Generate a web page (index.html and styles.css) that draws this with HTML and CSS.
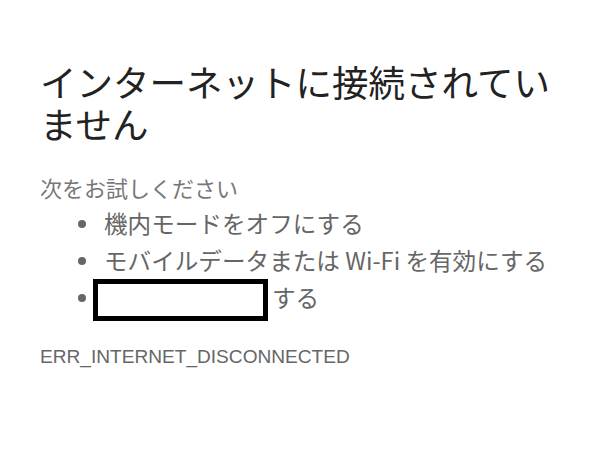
FILE: index.html
```html
<!DOCTYPE html>
<html lang="ja">
<head>
<meta charset="utf-8">
<link rel="stylesheet" href="styles.css">
</head>
<body>
<main class="page">
  <h1 class="title">インターネットに接続されていません</h1>
  <p class="try">次をお試しください</p>
  <ul class="tips">
    <li>機内モードをオフにする</li>
    <li>モバイルデータまたは Wi-Fi を有効にする</li>
    <li><span class="redact"></span>する</li>
  </ul>
  <div class="code">ERR_INTERNET_DISCONNECTED</div>
</main>
</body>
</html>
```
FILE: styles.css
```css
html, body {
  margin: 0;
  padding: 0;
  background: #ffffff;
}
.page {
  padding: 61px 40px 0 40px;
  font-family: "Noto Sans CJK JP", "Noto Sans", sans-serif;
}
.title {
  margin: 0;
  font-size: 36.5px;
  line-height: 42px;
  font-weight: 400;
  color: #222222;
  width: 530px;
}
.try {
  margin: 27px 0 0 0;
  font-size: 22px;
  line-height: 30px;
  color: #777777;
}
.tips {
  list-style: none;
  margin: 3px 0 0 0;
  padding: 0 0 0 64px;
}
.tips li {
  position: relative;
  font-size: 23.6px;
  line-height: 37px;
  color: #666666;
  white-space: nowrap;
}
.tips li::before {
  content: "";
  position: absolute;
  left: -26px;
  top: 15px;
  width: 8px;
  height: 8px;
  border-radius: 50%;
  background: #666666;
}
.redact {
  display: inline-block;
  box-sizing: border-box;
  width: 175px;
  height: 42px;
  border: 5px solid #000000;
  background: #ffffff;
  margin-left: -11px;
  margin-right: 4px;
  vertical-align: middle;
  position: relative;
  top: -1px;
}
.code {
  margin-top: 23px;
  font-family: "Liberation Sans", Arial, sans-serif;
  font-size: 19.1px;
  line-height: 24px;
  color: #666666;
}
```
